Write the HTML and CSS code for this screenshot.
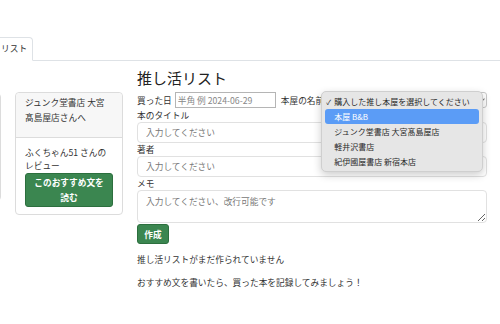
FILE: index.html
```html
<!DOCTYPE html>
<html lang="ja">
<head>
    <meta charset="UTF-8">
    <meta name="viewport" content="width=device-width, initial-scale=1.0">
    <title>推し活リスト</title>
    <link rel="stylesheet" href="styles.css">
</head>
<body>
    <ul class="nav-tabs">
        <li class="tab active">リスト</li>
    </ul>

    <div class="content">
        <div class="cards">
            <div class="card card-offscreen"></div>
            <div class="card">
                <div class="card-header">ジュンク堂書店 大宮<br>髙島屋店さんへ</div>
                <div class="card-body">
                    <p>ふくちゃん51 さんの<br>レビュー</p>
                    <button class="btn btn-success btn-wide">このおすすめ文を<br>読む</button>
                </div>
            </div>
        </div>

        <div class="main">
            <h1 class="title">推し活リスト</h1>
            <form class="form">
                <div class="row-inline">
                    <label>買った日</label>
                    <input class="date-input" type="text" placeholder="半角 例 2024-06-29">
                    <label>本屋の名前</label>
                    <div class="select-wrap">
                        <div class="select">
                            <span class="chevron"></span>
                        </div>
                        <div class="popup">
                            <div class="option checked"><span class="check">✓</span>購入した推し本屋を選択してください</div>
                            <div class="option selected">本屋 B&amp;B</div>
                            <div class="option">ジュンク堂書店 大宮髙島屋店</div>
                            <div class="option">軽井沢書店</div>
                            <div class="option">紀伊國屋書店 新宿本店</div>
                        </div>
                    </div>
                </div>

                <label class="field-label first">本のタイトル</label>
                <input class="form-control" type="text" placeholder="入力してください">

                <label class="field-label">著者</label>
                <input class="form-control" type="text" placeholder="入力してください">

                <label class="field-label">メモ</label>
                <textarea class="form-control memo" placeholder="入力してください、改行可能です"></textarea>

                <button type="button" class="btn btn-success btn-small">作成</button>
            </form>

            <p class="empty">推し活リストがまだ作られていません</p>
            <p class="empty-hint">おすすめ文を書いたら、買った本を記録してみましょう！</p>
        </div>
    </div>
</body>
</html>
```

FILE: styles.css
```css
body {
    margin: 0;
    font-family: "Noto Sans CJK JP", "Noto Sans", sans-serif;
    font-size: 8.7px;
    line-height: 13px;
    color: #333;
    background-color: #fff;
    overflow: hidden;
}
.nav-tabs {
    list-style: none;
    margin: 37px 0 0;
    padding: 0;
    display: flex;
    border-bottom: 1px solid #dee2e6;
}
.tab {
    margin-left: -12px;
    margin-bottom: -1px;
    height: 22px;
    line-height: 22px;
    padding: 0 5px 0 12px;
    border: 1px solid #dee2e6;
    border-bottom-color: #fff;
    border-radius: 4px 4px 0 0;
    background-color: #fff;
}
.content {
    display: flex;
    gap: 14px;
    margin-left: -107px;
    padding-top: 8px;
}
.cards {
    display: flex;
    gap: 14px;
    padding-top: 23px;
    align-items: flex-start;
}
.card {
    width: 108px;
    box-sizing: border-box;
    border: 1px solid #dcdcdc;
    border-radius: 4px;
}
.card-offscreen {
    height: 108px;
    margin-top: 1px;
}
.card-header {
    background-color: #f7f7f7;
    border-bottom: 1px solid #dcdcdc;
    line-height: 15px;
    padding: 2px 9px 12px;
    border-radius: 4px 4px 0 0;
}
.card-body {
    padding: 8px 9px 7px;
}
.card-body p {
    margin: 0;
}
.btn {
    font-family: inherit;
    font-size: 8.7px;
    font-weight: bold;
    color: #fff;
    background-color: #3b8650;
    border: 1px solid #2c6f3e;
    border-radius: 3px;
    cursor: pointer;
}
.btn-wide {
    display: block;
    width: 100%;
    line-height: 15px;
    padding: 1px 0;
    margin-top: 1px;
}
.btn-small {
    display: block;
    width: 32px;
    height: 20px;
    padding: 0;
    margin-top: 1px;
}
.main {
    width: 350px;
}
.title {
    margin: 0;
    font-size: 15px;
    font-weight: normal;
    line-height: 18px;
    color: #222;
}
.form {
    display: flex;
    flex-direction: column;
    align-items: flex-start;
}
.row-inline {
    display: flex;
    align-items: center;
    width: 100%;
    margin-top: 5px;
}
.date-input {
    width: 101px;
    height: 16px;
    box-sizing: border-box;
    margin: 0 5px 0 3px;
    padding: 0 2px;
    border: 1px solid #b5b5b5;
    font-family: inherit;
    font-size: 8.7px;
    color: #333;
}
.date-input::placeholder {
    color: #888;
}
.select-wrap {
    position: relative;
    flex: 1;
    margin-left: 3px;
}
.select {
    height: 16px;
    box-sizing: border-box;
    border: 1px solid #c8c8c8;
    border-radius: 3px;
    display: flex;
    justify-content: flex-end;
    align-items: center;
    padding-right: 2px;
}
.chevron {
    width: 3px;
    height: 3px;
    border-right: 1px solid #777;
    border-bottom: 1px solid #777;
    transform: rotate(45deg);
    margin-bottom: 2px;
}
.popup {
    position: absolute;
    top: -1px;
    left: -6px;
    width: 162px;
    box-sizing: border-box;
    padding: 2px 3px 2px;
    background-color: #e6e6e6;
    border: 1px solid #cfcfcf;
    border-radius: 5px;
    box-shadow: 0 3px 8px rgba(0, 0, 0, 0.2);
    font-size: 8px;
    line-height: 15px;
    color: #2a2a2a;
}
.option {
    padding-left: 9px;
    border-radius: 3px;
    height: 15px;
}
.option.checked {
    padding-left: 1px;
}
.check {
    display: inline-block;
    width: 8px;
    font-size: 7px;
}
.option.selected {
    background-color: #5b9cf6;
    color: #fff;
}
.field-label {
    display: block;
    line-height: 13px;
}
.field-label.first {
    margin-top: 1px;
}
.form-control {
    width: 100%;
    height: 21px;
    box-sizing: border-box;
    border: 1px solid #e1e1e1;
    border-radius: 4px;
    padding: 0 8px;
    font-family: inherit;
    font-size: 8.7px;
    color: #333;
}
.form-control::placeholder {
    color: #777;
}
.memo {
    height: 33px;
    padding-top: 4px;
    resize: vertical;
}
.empty {
    margin: 9px 0 0;
}
.empty-hint {
    margin: 10px 0 0;
}
```
